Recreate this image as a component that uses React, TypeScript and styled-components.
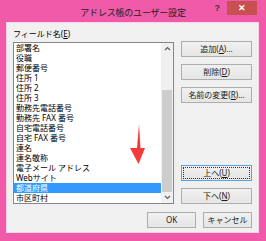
import React from 'react';
import styled, { createGlobalStyle } from 'styled-components';

const GlobalStyle = createGlobalStyle`
    html, body {
        margin: 0;
        padding: 0;
        background: #ffffff;
    }
`;

const FONT = `"Noto Sans", "Noto Sans CJK JP", sans-serif`;

const Frame = styled.div`
    width: 266px;
    height: 241px;
    box-sizing: border-box;
    background: #f15aa8;
    display: flex;
    flex-direction: column;
    padding: 0 7px 8px 6px;
    font-family: ${FONT};
    color: #000;
`;

const TitleBar = styled.div`
    height: 22px;
    display: grid;
    grid-template-columns: 1fr auto 1fr;
    align-items: start;
    margin: 0 -7px 0 -6px;
`;

const Title = styled.div`
    grid-column: 2;
    font-size: 9px;
    line-height: 10px;
    padding-top: 8px;
    color: #222;
    letter-spacing: -0.2px;
`;

const Controls = styled.div`
    grid-column: 3;
    justify-self: end;
    display: flex;
    align-items: flex-start;
    padding-right: 9px;
    padding-top: 1px;
`;

const Help = styled.span`
    font-family: "Liberation Sans", sans-serif;
    font-weight: bold;
    font-size: 9px;
    line-height: 10px;
    color: #3a3a3a;
    margin-top: 2px;
    margin-right: 7px;
`;

const Close = styled.div`
    width: 30px;
    height: 14px;
    background: #c75050;
    color: #fff;
    display: flex;
    align-items: center;
    justify-content: center;
    font-family: "Liberation Sans", sans-serif;
    font-size: 9px;
    font-weight: bold;
`;

const Client = styled.div`
    flex: 1;
    background: #f0f0f0;
    border: 1px solid #f8d6e7;
    display: flex;
    flex-direction: column;
    padding: 6px 5px 0 6px;
`;

const FieldLabel = styled.div`
    font-size: 8px;
    line-height: 10px;
    height: 12px;
`;

const Body = styled.div`
    display: flex;
    gap: 7px;
    align-items: flex-start;
`;

const ListBox = styled.div`
    position: relative;
    width: 161px;
    height: 162px;
    box-sizing: border-box;
    border: 1px solid #828790;
    background: #fff;
    display: flex;
    margin-top: 1px;
`;

const Items = styled.div`
    flex: 1;
    display: flex;
    flex-direction: column;
`;

const Item = styled.div<{ $selected?: boolean }>`
    height: 10px;
    line-height: 10px;
    font-size: 8px;
    padding-left: 2px;
    white-space: nowrap;
    background: ${p => (p.$selected ? '#3399ff' : 'transparent')};
    color: ${p => (p.$selected ? '#fff' : '#000')};
`;

const ScrollBar = styled.div`
    width: 11px;
    display: flex;
    flex-direction: column;
    background: #f0f0f0;
    border-left: 1px solid #f0f0f0;
`;

const ScrollArrow = styled.div`
    height: 11px;
    display: flex;
    align-items: center;
    justify-content: center;
    color: #606060;
`;

const Track = styled.div<{ $size: number }>`
    height: ${p => p.$size}px;
`;

const Thumb = styled.div`
    flex: 1;
    background: #cdcdcd;
    margin: 0 1px 0 0;
`;

const Arrow = styled.svg`
    position: absolute;
    left: 116px;
    top: 81px;
`;

const Buttons = styled.div`
    width: 71px;
    height: 163px;
    display: flex;
    flex-direction: column;
    gap: 7px;
`;

const Button = styled.div<{ $width?: number; $focus?: boolean }>`
    width: ${p => (p.$width ? `${p.$width}px` : '100%')};
    height: 16px;
    box-sizing: border-box;
    border: 1px solid ${p => (p.$focus ? '#5ea2e6' : '#adadad')};
    background: linear-gradient(#f0f0f0, #e5e5e5);
    display: flex;
    align-items: center;
    justify-content: center;
    font-size: 8px;
    line-height: 10px;
    white-space: nowrap;
    color: #1a1a1a;
    outline: ${p => (p.$focus ? '1px dotted #333' : 'none')};
    outline-offset: -3px;
`;

const Spacer = styled.div`
    flex: 1;
`;

const Footer = styled.div`
    display: flex;
    justify-content: flex-end;
    gap: 7px;
    margin-top: 8px;
    padding-right: 1px;
`;

const U = styled.span`
    text-decoration: underline;
`;

const fields = [
    '部署名',
    '役職',
    '郵便番号',
    '住所 1',
    '住所 2',
    '住所 3',
    '勤務先電話番号',
    '勤務先 FAX 番号',
    '自宅電話番号',
    '自宅 FAX 番号',
    '連名',
    '連名敬称',
    '電子メール アドレス',
    'Webサイト',
    '都道府県',
    '市区町村',
];

const Chevron: React.FC<{ up?: boolean }> = ({ up }) => (
    <svg width="7" height="5" viewBox="0 0 7 5">
        <path
            d={up ? 'M1 4 L3.5 1.5 L6 4' : 'M1 1 L3.5 3.5 L6 1'}
            stroke="#606060"
            strokeWidth="1.2"
            fill="none"
        />
    </svg>
);

const App: React.FC = () => {
    return (
        <>
            <GlobalStyle />
            <Frame>
                <TitleBar>
                    <Title>アドレス帳のユーザー設定</Title>
                    <Controls>
                        <Help>?</Help>
                        <Close>✕</Close>
                    </Controls>
                </TitleBar>
                <Client>
                    <FieldLabel>
                        フィールド名(<U>E</U>)
                    </FieldLabel>
                    <Body>
                        <ListBox>
                            <Items>
                                {fields.map(f => (
                                    <Item key={f} $selected={f === '都道府県'}>
                                        {f}
                                    </Item>
                                ))}
                            </Items>
                            <ScrollBar>
                                <ScrollArrow>
                                    <Chevron up />
                                </ScrollArrow>
                                <Track $size={36} />
                                <Thumb />
                                <ScrollArrow>
                                    <Chevron />
                                </ScrollArrow>
                            </ScrollBar>
                            <Arrow width="16" height="40" viewBox="0 0 16 40">
                                <polygon
                                    points="9,0 10.5,24 15,24 8.5,40 0,24 7,24"
                                    fill="#f53a3a"
                                />
                            </Arrow>
                        </ListBox>
                        <Buttons>
                            <Button>
                                追加(<U>A</U>)...
                            </Button>
                            <Button>
                                削除(<U>D</U>)
                            </Button>
                            <Button>
                                名前の変更(<U>R</U>)...
                            </Button>
                            <Spacer />
                            <Button $focus>
                                上へ(<U>U</U>)
                            </Button>
                            <Button>
                                下へ(<U>N</U>)
                            </Button>
                        </Buttons>
                    </Body>
                    <Footer>
                        <Button $width={49}>OK</Button>
                        <Button $width={49}>キャンセル</Button>
                    </Footer>
                </Client>
            </Frame>
        </>
    );
};

export default App;
